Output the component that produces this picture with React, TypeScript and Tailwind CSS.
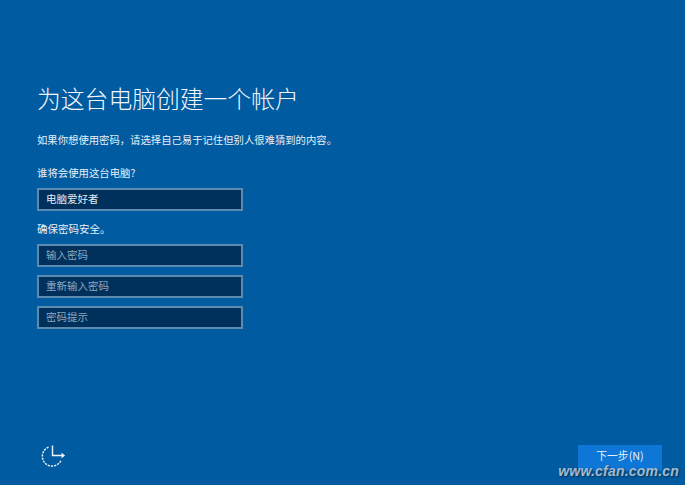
const FONT = "font-['Noto_Sans_CJK_SC','Liberation_Sans',sans-serif]";

function Field({ text, filled }: { text: string; filled?: boolean }) {
  return (
    <div
      className={`w-[206px] h-[23px] border-2 border-[#5d8bb0] bg-[#00315d] pl-[7px] flex items-center text-[10.5px] leading-none ${
        filled ? "text-[#e4edf4]" : "text-[#8fa9c0]"
      }`}
    >
      {text}
    </div>
  );
}

function ClockArrow() {
  return (
    <svg width="26" height="26" viewBox="0 0 26 26" fill="none" stroke="#eef4f9" strokeWidth="1.4">
      <path d="M8.5 4.2A9.8 9.8 0 1 0 21.2 17" strokeDasharray="2.2 1" />
      <path d="M12.5 2.5v10h11" />
      <path d="M21.5 10.5l2.5 2-2.5 2" />
    </svg>
  );
}

export default function App() {
  return (
    <div className={`relative w-[685px] h-[485px] overflow-hidden bg-[#005ba1] text-white flex flex-col ${FONT}`}>
      <main className="pl-[37px] pt-[81px] flex-1">
        <h1 className="text-[23.8px] leading-[34px] font-light text-[#f2f6fa]">为这台电脑创建一个帐户</h1>
        <p className="mt-[17px] text-[10.35px] leading-[16px] text-[#e8f0f6]">如果你想使用密码，请选择自己易于记住但别人很难猜到的内容。</p>
        <p className="mt-[17px] text-[10.4px] leading-[16px] text-[#e8f0f6]">谁将会使用这台电脑?</p>
        <div className="mt-[7px]">
          <Field text="电脑爱好者" filled />
        </div>
        <p className="mt-[10px] text-[10.5px] leading-[16px] text-[#e8f0f6]">确保密码安全。</p>
        <div className="mt-[7px] flex flex-col gap-[8px]">
          <Field text="输入密码" />
          <Field text="重新输入密码" />
          <Field text="密码提示" />
        </div>
      </main>
      <footer className="flex items-start justify-between pl-[40px] pr-[23px] pb-[14px]">
        <div className="-mt-[2px] h-[26px]">
          <ClockArrow />
        </div>
        <div className="w-[84px] h-[26px] pb-[5px] bg-[#0d76d6] flex items-center justify-center text-[10.8px] text-[#e8f0f6]">下一步(N)</div>
      </footer>
      <div className="absolute right-[6px] bottom-[6px] font-['Liberation_Sans',sans-serif] italic font-bold text-[14px] leading-[16px] tracking-[0.2px] text-[#a3bace] [text-shadow:1px_1px_2px_#0a2f52]">
        www.cfan.com.cn
      </div>
    </div>
  );
}
